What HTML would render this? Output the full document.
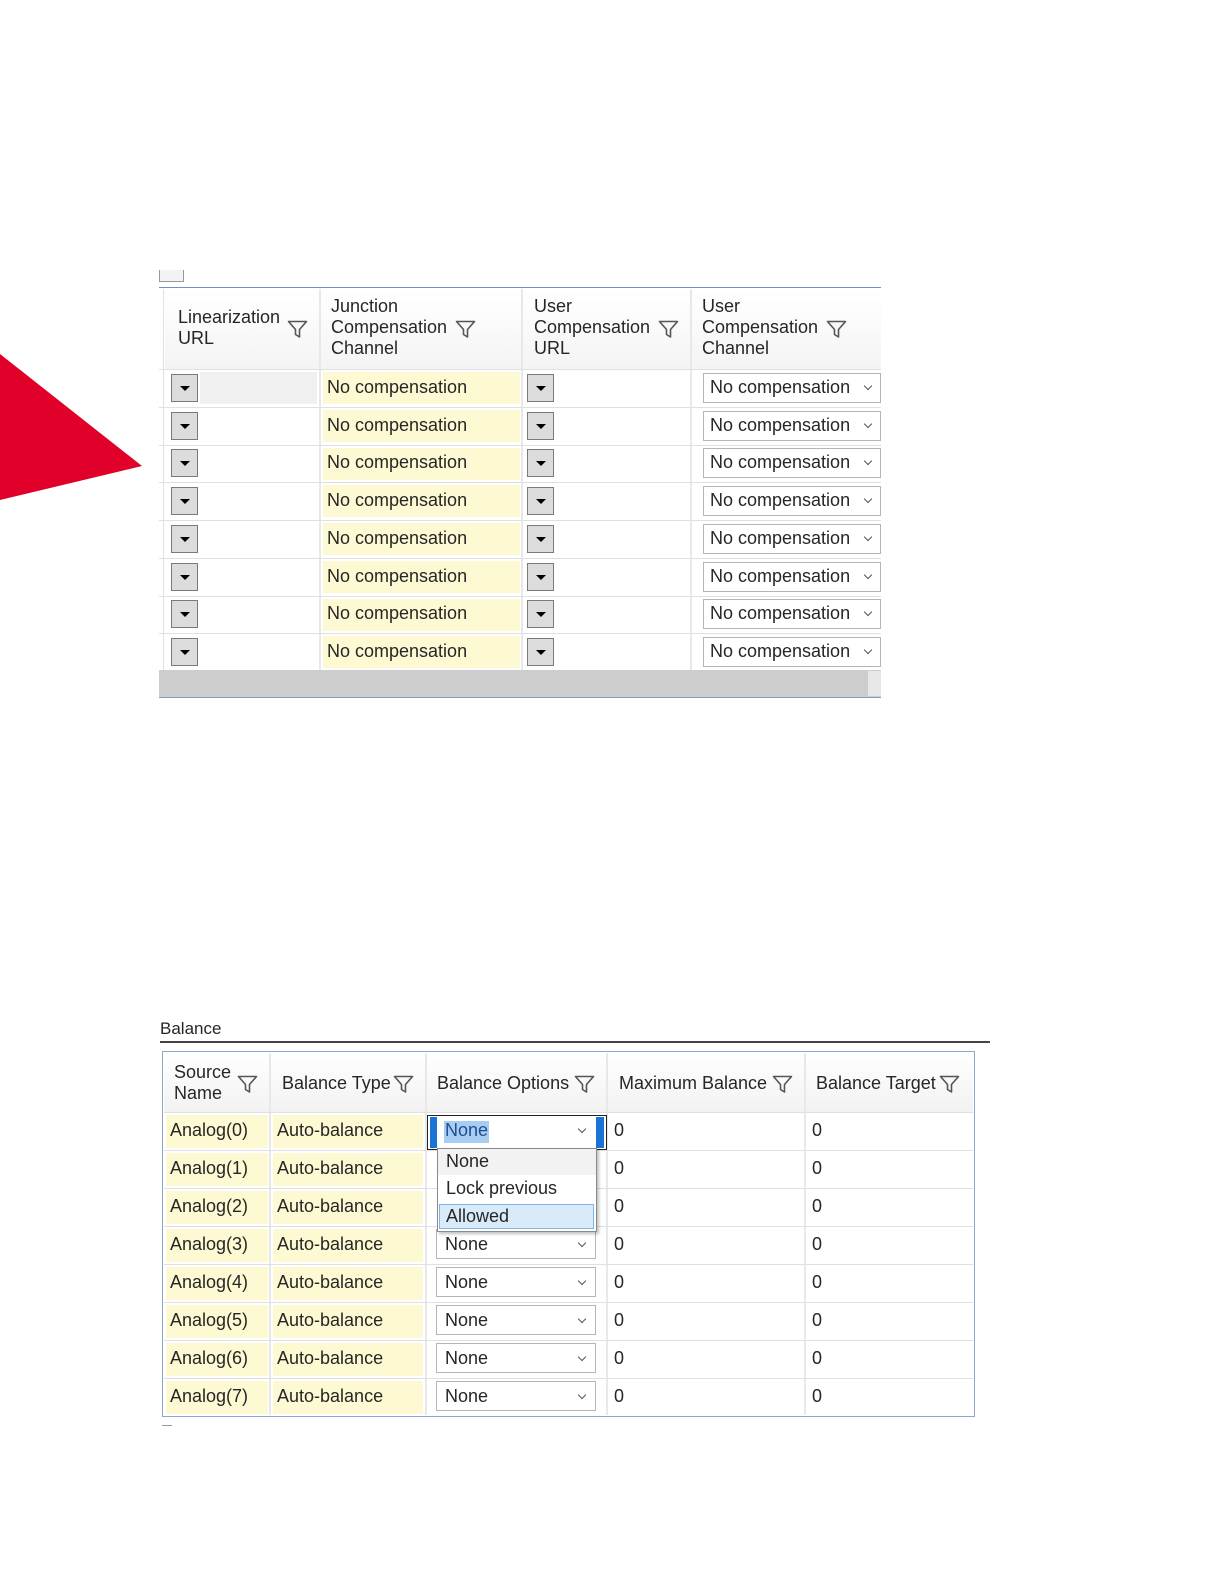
<!DOCTYPE html>
<html><head><meta charset="utf-8"><style>
*{margin:0;padding:0;box-sizing:border-box}
body{width:1224px;height:1584px;background:#fff;position:relative;overflow:hidden;font-family:"Liberation Sans",sans-serif;font-size:18px;color:#262626}
.a{position:absolute}
.t{position:absolute;line-height:21px;white-space:nowrap}
.hl{position:absolute;height:1px;background:#e0e0e0}
.vl{position:absolute;width:2px;background:#e8e8e8}
.btn{position:absolute;width:27px;height:28px;background:#dcdcdc;border:1px solid #7a7a7a}
.btn:after{content:"";position:absolute;left:8px;top:11px;border-left:5px solid transparent;border-right:5px solid transparent;border-top:5px solid #000}
.yel{position:absolute;background:#fdf9d2}
.cb{position:absolute;height:30px;border:1px solid #b5b5b5;background:#fff}
.chev{position:absolute;width:6px;height:6px;border-right:1.5px solid #555;border-bottom:1.5px solid #555;transform:rotate(45deg)}
.f{position:absolute}
</style></head><body>
<svg class="a" style="left:0;top:0" width="160" height="520"><polygon points="0,354 142,466 0,500" fill="#e0002a"/></svg>

<!-- top table -->
<div class="a" style="left:159px;top:270px;width:25px;height:12px;border:1px solid #999;border-top:none;background:#f3f3f3"></div>
<div class="a" style="left:159px;top:287px;width:722px;height:1px;background:#6f8fc6"></div>
<div class="a" style="left:165px;top:289px;width:716px;height:80px;background:linear-gradient(#fff,#f4f4f4)"></div>
<div class="vl" style="left:319px;top:289px;height:381px"></div>
<div class="vl" style="left:521px;top:289px;height:381px"></div>
<div class="vl" style="left:690px;top:289px;height:381px"></div>
<div class="a" style="left:163px;top:289px;width:1px;height:381px;background:#e0e0e0"></div>
<div class="t" style="left:178px;top:307px">Linearization<br>URL</div>
<div class="t" style="left:331px;top:296px">Junction<br>Compensation<br>Channel</div>
<div class="t" style="left:534px;top:296px">User<br>Compensation<br>URL</div>
<div class="t" style="left:702px;top:296px">User<br>Compensation<br>Channel</div>
<svg class="f" style="left:287px;top:320px" width="21" height="19"><path d="M1.5 1.5h18l-7 8v7.5l-4-2.5v-5z" fill="none" stroke="#555" stroke-width="1.6" stroke-linejoin="round"/></svg>
<svg class="f" style="left:455px;top:320px" width="21" height="19"><path d="M1.5 1.5h18l-7 8v7.5l-4-2.5v-5z" fill="none" stroke="#555" stroke-width="1.6" stroke-linejoin="round"/></svg>
<svg class="f" style="left:658px;top:320px" width="21" height="19"><path d="M1.5 1.5h18l-7 8v7.5l-4-2.5v-5z" fill="none" stroke="#555" stroke-width="1.6" stroke-linejoin="round"/></svg>
<svg class="f" style="left:826px;top:320px" width="21" height="19"><path d="M1.5 1.5h18l-7 8v7.5l-4-2.5v-5z" fill="none" stroke="#555" stroke-width="1.6" stroke-linejoin="round"/></svg>
<div class="hl" style="left:159px;top:369px;width:722px"></div>
<div class="a" style="left:200px;top:372px;width:117px;height:32px;background:#f0f0f0"></div>

<div class="yel" style="left:323px;top:372px;width:197px;height:32px"></div>
<div class="yel" style="left:323px;top:410px;width:197px;height:32px"></div>
<div class="yel" style="left:323px;top:448px;width:197px;height:32px"></div>
<div class="yel" style="left:323px;top:485px;width:197px;height:32px"></div>
<div class="yel" style="left:323px;top:523px;width:197px;height:32px"></div>
<div class="yel" style="left:323px;top:561px;width:197px;height:32px"></div>
<div class="yel" style="left:323px;top:599px;width:197px;height:32px"></div>
<div class="yel" style="left:323px;top:636px;width:197px;height:32px"></div>

<div class="hl" style="left:159px;top:407px;width:722px"></div>
<div class="hl" style="left:159px;top:445px;width:722px"></div>
<div class="hl" style="left:159px;top:482px;width:722px"></div>
<div class="hl" style="left:159px;top:520px;width:722px"></div>
<div class="hl" style="left:159px;top:558px;width:722px"></div>
<div class="hl" style="left:159px;top:596px;width:722px"></div>
<div class="hl" style="left:159px;top:633px;width:722px"></div>

<div class="btn" style="left:171px;top:374px"></div><div class="btn" style="left:527px;top:374px"></div>
<div class="btn" style="left:171px;top:412px"></div><div class="btn" style="left:527px;top:412px"></div>
<div class="btn" style="left:171px;top:449px"></div><div class="btn" style="left:527px;top:449px"></div>
<div class="btn" style="left:171px;top:487px"></div><div class="btn" style="left:527px;top:487px"></div>
<div class="btn" style="left:171px;top:525px"></div><div class="btn" style="left:527px;top:525px"></div>
<div class="btn" style="left:171px;top:563px"></div><div class="btn" style="left:527px;top:563px"></div>
<div class="btn" style="left:171px;top:600px"></div><div class="btn" style="left:527px;top:600px"></div>
<div class="btn" style="left:171px;top:638px"></div><div class="btn" style="left:527px;top:638px"></div>

<div class="t" style="left:327px;top:377px">No compensation</div>
<div class="t" style="left:327px;top:415px">No compensation</div>
<div class="t" style="left:327px;top:452px">No compensation</div>
<div class="t" style="left:327px;top:490px">No compensation</div>
<div class="t" style="left:327px;top:528px">No compensation</div>
<div class="t" style="left:327px;top:566px">No compensation</div>
<div class="t" style="left:327px;top:603px">No compensation</div>
<div class="t" style="left:327px;top:641px">No compensation</div>

<div class="cb" style="left:703px;top:373px;width:178px"></div>
<div class="cb" style="left:703px;top:411px;width:178px"></div>
<div class="cb" style="left:703px;top:448px;width:178px"></div>
<div class="cb" style="left:703px;top:486px;width:178px"></div>
<div class="cb" style="left:703px;top:524px;width:178px"></div>
<div class="cb" style="left:703px;top:562px;width:178px"></div>
<div class="cb" style="left:703px;top:599px;width:178px"></div>
<div class="cb" style="left:703px;top:637px;width:178px"></div>
<div class="t" style="left:710px;top:377px">No compensation</div>
<div class="t" style="left:710px;top:415px">No compensation</div>
<div class="t" style="left:710px;top:452px">No compensation</div>
<div class="t" style="left:710px;top:490px">No compensation</div>
<div class="t" style="left:710px;top:528px">No compensation</div>
<div class="t" style="left:710px;top:566px">No compensation</div>
<div class="t" style="left:710px;top:603px">No compensation</div>
<div class="t" style="left:710px;top:641px">No compensation</div>
<div class="chev" style="left:865px;top:383px"></div>
<div class="chev" style="left:865px;top:421px"></div>
<div class="chev" style="left:865px;top:458px"></div>
<div class="chev" style="left:865px;top:496px"></div>
<div class="chev" style="left:865px;top:534px"></div>
<div class="chev" style="left:865px;top:572px"></div>
<div class="chev" style="left:865px;top:609px"></div>
<div class="chev" style="left:865px;top:647px"></div>

<div class="a" style="left:159px;top:670px;width:722px;height:27px;background:#cdcdcd"></div>
<div class="a" style="left:868px;top:671px;width:13px;height:25px;background:#e8e8e8"></div>
<div class="a" style="left:159px;top:697px;width:722px;height:1px;background:#7f9cc8"></div>

<!-- Balance -->
<div class="t" style="left:160px;top:1018px;font-size:17px">Balance</div>
<div class="a" style="left:160px;top:1041px;width:830px;height:2px;background:#444"></div>
<div class="a" style="left:162px;top:1051px;width:813px;height:366px;border:1.5px solid #8fa6cc"></div>
<div class="a" style="left:164px;top:1053px;width:809px;height:59px;background:linear-gradient(#fff,#f2f2f2)"></div>
<div class="vl" style="left:269px;top:1053px;height:362px"></div>
<div class="vl" style="left:425px;top:1053px;height:362px"></div>
<div class="vl" style="left:606px;top:1053px;height:362px"></div>
<div class="vl" style="left:804px;top:1053px;height:362px"></div>
<div class="t" style="left:174px;top:1062px">Source<br>Name</div>
<div class="t" style="left:282px;top:1073px">Balance Type</div>
<div class="t" style="left:437px;top:1073px">Balance Options</div>
<div class="t" style="left:619px;top:1073px">Maximum Balance</div>
<div class="t" style="left:816px;top:1073px">Balance Target</div>
<svg class="f" style="left:237px;top:1075px" width="21" height="19"><path d="M1.5 1.5h18l-7 8v7.5l-4-2.5v-5z" fill="none" stroke="#555" stroke-width="1.6" stroke-linejoin="round"/></svg>
<svg class="f" style="left:393px;top:1075px" width="21" height="19"><path d="M1.5 1.5h18l-7 8v7.5l-4-2.5v-5z" fill="none" stroke="#555" stroke-width="1.6" stroke-linejoin="round"/></svg>
<svg class="f" style="left:574px;top:1075px" width="21" height="19"><path d="M1.5 1.5h18l-7 8v7.5l-4-2.5v-5z" fill="none" stroke="#555" stroke-width="1.6" stroke-linejoin="round"/></svg>
<svg class="f" style="left:772px;top:1075px" width="21" height="19"><path d="M1.5 1.5h18l-7 8v7.5l-4-2.5v-5z" fill="none" stroke="#555" stroke-width="1.6" stroke-linejoin="round"/></svg>
<svg class="f" style="left:939px;top:1075px" width="21" height="19"><path d="M1.5 1.5h18l-7 8v7.5l-4-2.5v-5z" fill="none" stroke="#555" stroke-width="1.6" stroke-linejoin="round"/></svg>

<div class="hl" style="left:164px;top:1112px;width:809px"></div>
<div class="hl" style="left:164px;top:1150px;width:809px"></div>
<div class="hl" style="left:164px;top:1188px;width:809px"></div>
<div class="hl" style="left:164px;top:1226px;width:809px"></div>
<div class="hl" style="left:164px;top:1264px;width:809px"></div>
<div class="hl" style="left:164px;top:1302px;width:809px"></div>
<div class="hl" style="left:164px;top:1340px;width:809px"></div>
<div class="hl" style="left:164px;top:1378px;width:809px"></div>

<div class="yel" style="left:166px;top:1115px;width:102px;height:33px"></div><div class="yel" style="left:273px;top:1115px;width:150px;height:33px"></div>
<div class="yel" style="left:166px;top:1153px;width:102px;height:33px"></div><div class="yel" style="left:273px;top:1153px;width:150px;height:33px"></div>
<div class="yel" style="left:166px;top:1191px;width:102px;height:33px"></div><div class="yel" style="left:273px;top:1191px;width:150px;height:33px"></div>
<div class="yel" style="left:166px;top:1229px;width:102px;height:33px"></div><div class="yel" style="left:273px;top:1229px;width:150px;height:33px"></div>
<div class="yel" style="left:166px;top:1267px;width:102px;height:33px"></div><div class="yel" style="left:273px;top:1267px;width:150px;height:33px"></div>
<div class="yel" style="left:166px;top:1305px;width:102px;height:33px"></div><div class="yel" style="left:273px;top:1305px;width:150px;height:33px"></div>
<div class="yel" style="left:166px;top:1343px;width:102px;height:33px"></div><div class="yel" style="left:273px;top:1343px;width:150px;height:33px"></div>
<div class="yel" style="left:166px;top:1381px;width:102px;height:33px"></div><div class="yel" style="left:273px;top:1381px;width:150px;height:33px"></div>

<div class="t" style="left:170px;top:1120px">Analog(0)</div><div class="t" style="left:277px;top:1120px">Auto-balance</div>
<div class="t" style="left:170px;top:1158px">Analog(1)</div><div class="t" style="left:277px;top:1158px">Auto-balance</div>
<div class="t" style="left:170px;top:1196px">Analog(2)</div><div class="t" style="left:277px;top:1196px">Auto-balance</div>
<div class="t" style="left:170px;top:1234px">Analog(3)</div><div class="t" style="left:277px;top:1234px">Auto-balance</div>
<div class="t" style="left:170px;top:1272px">Analog(4)</div><div class="t" style="left:277px;top:1272px">Auto-balance</div>
<div class="t" style="left:170px;top:1310px">Analog(5)</div><div class="t" style="left:277px;top:1310px">Auto-balance</div>
<div class="t" style="left:170px;top:1348px">Analog(6)</div><div class="t" style="left:277px;top:1348px">Auto-balance</div>
<div class="t" style="left:170px;top:1386px">Analog(7)</div><div class="t" style="left:277px;top:1386px">Auto-balance</div>

<div class="t" style="left:614px;top:1120px">0</div><div class="t" style="left:812px;top:1120px">0</div>
<div class="t" style="left:614px;top:1158px">0</div><div class="t" style="left:812px;top:1158px">0</div>
<div class="t" style="left:614px;top:1196px">0</div><div class="t" style="left:812px;top:1196px">0</div>
<div class="t" style="left:614px;top:1234px">0</div><div class="t" style="left:812px;top:1234px">0</div>
<div class="t" style="left:614px;top:1272px">0</div><div class="t" style="left:812px;top:1272px">0</div>
<div class="t" style="left:614px;top:1310px">0</div><div class="t" style="left:812px;top:1310px">0</div>
<div class="t" style="left:614px;top:1348px">0</div><div class="t" style="left:812px;top:1348px">0</div>
<div class="t" style="left:614px;top:1386px">0</div><div class="t" style="left:812px;top:1386px">0</div>

<!-- combos -->
<div class="a" style="left:427px;top:1115px;width:180px;height:35px;border:1.5px solid #222;background:#fff"></div>
<div class="a" style="left:430px;top:1117px;width:7px;height:31px;background:#1a74d6"></div>
<div class="a" style="left:596px;top:1117px;width:8px;height:31px;background:#1a74d6"></div>
<div class="a" style="left:444px;top:1121px;width:45px;height:22px;background:#a9cdf2"></div>
<div class="t" style="left:445px;top:1120px;color:#1e4f8f">None</div>
<div class="chev" style="left:579px;top:1126px"></div>

<div class="cb" style="left:436px;top:1229px;width:160px"></div>
<div class="cb" style="left:436px;top:1267px;width:160px"></div>
<div class="cb" style="left:436px;top:1305px;width:160px"></div>
<div class="cb" style="left:436px;top:1343px;width:160px"></div>
<div class="cb" style="left:436px;top:1381px;width:160px"></div>
<div class="t" style="left:445px;top:1234px">None</div>
<div class="t" style="left:445px;top:1272px">None</div>
<div class="t" style="left:445px;top:1310px">None</div>
<div class="t" style="left:445px;top:1348px">None</div>
<div class="t" style="left:445px;top:1386px">None</div>
<div class="chev" style="left:579px;top:1240px"></div>
<div class="chev" style="left:579px;top:1278px"></div>
<div class="chev" style="left:579px;top:1316px"></div>
<div class="chev" style="left:579px;top:1354px"></div>
<div class="chev" style="left:579px;top:1392px"></div>

<!-- dropdown list -->
<div class="a" style="left:437px;top:1148px;width:160px;height:84px;border:1px solid #8a8a8a;background:#fff;box-shadow:2px 2px 3px rgba(0,0,0,.25)"></div>
<div class="a" style="left:438px;top:1149px;width:158px;height:26px;background:#f2f2f2"></div>
<div class="a" style="left:439px;top:1204px;width:155px;height:25px;background:#d9ebf9;border:1px solid #7db5e6"></div>
<div class="t" style="left:446px;top:1151px">None</div>
<div class="t" style="left:446px;top:1178px">Lock previous</div>
<div class="t" style="left:446px;top:1206px">Allowed</div>
<div class="a" style="left:162px;top:1425px;width:10px;height:1px;background:#999"></div>
</body></html>
